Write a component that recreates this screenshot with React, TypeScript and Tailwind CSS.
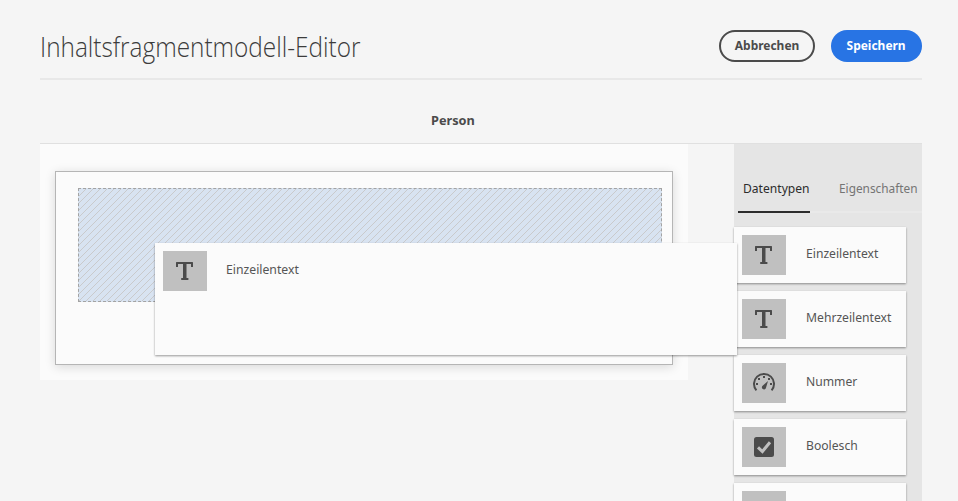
import React from "react";

type Kind = "text" | "number" | "boolean" | "none";

function TypeIcon({ kind }: { kind: Kind }) {
  return (
    <svg className="block h-10 w-11 shrink-0 bg-[#c0c0c0]" viewBox="0 0 44 40" fill="none">
      {kind === "text" && (
        <path
          fill="#4b4b4b"
          d="M13.6 11H29.4Q30 11 30 11.6V16H28V13H23.5V27H25.4V29H18.2V27H20V13H15V16H13V11.6Q13 11 13.6 11Z"
        />
      )}
      {kind === "number" && (
        <g>
          <path d="M14.4 27.4A10 10 0 1 1 29.6 27.4" stroke="#4b4b4b" strokeWidth="2" />
          <g fill="#4b4b4b">
            <rect x="16" y="15" width="2" height="2" />
            <rect x="21" y="13" width="2" height="2" />
            <rect x="26" y="15" width="2" height="2" />
            <rect x="14" y="20" width="2" height="2" />
            <rect x="28" y="20" width="2" height="2" />
            <path d="M26 18L24 24.8A2.1 2.1 0 1 1 20.6 22.7Z" />
          </g>
        </g>
      )}
      {kind === "boolean" && (
        <g>
          <rect x="12" y="10" width="20" height="20" rx="2.5" fill="#4b4b4b" />
          <path d="M16 20.3L20.4 24.5L28 15.2" stroke="#c0c0c0" strokeWidth="3" />
        </g>
      )}
    </svg>
  );
}

const types: { label: string; kind: Kind }[] = [
  { label: "Einzeilentext", kind: "text" },
  { label: "Mehrzeilentext", kind: "text" },
  { label: "Nummer", kind: "number" },
  { label: "Boolesch", kind: "boolean" },
  { label: "", kind: "none" },
];

export default function App() {
  return (
    <div className="h-[501px] w-[958px] overflow-hidden bg-[#f5f5f5] pl-10 pr-9 font-['Noto_Sans',sans-serif] text-[13px] text-[#4b4b4b]">
      <header className="flex h-20 items-start justify-between border-b-2 border-[#e8e8e8]">
        <h1 className="mt-[28px] origin-left scale-x-[0.902] whitespace-nowrap font-['Open_Sans',sans-serif] text-[27px] font-light leading-[38px] text-[#3c3c3c]">
          Inhaltsfragmentmodell-Editor
        </h1>
        <div className="mt-[30px] flex gap-4 font-bold">
          <button className="flex h-8 w-24 items-center justify-center rounded-full border-2 border-[#4b4b4b]">
            <span className="inline-block scale-x-[0.92]">Abbrechen</span>
          </button>
          <button className="flex h-8 w-[91px] items-center justify-center rounded-full bg-[#2874e4] text-white">
            <span className="inline-block scale-x-[0.92]">Speichern</span>
          </button>
        </div>
      </header>
      <div className="flex h-16 border-b border-[#e0e0e0] pl-[391px] pt-[30px] font-bold leading-5">
        <span className="inline-block origin-left scale-x-[0.98]">Person</span>
      </div>
      <div className="flex items-start justify-between">
        <main className="h-[236px] w-[648px] bg-[#fbfbfb] px-[15px] pt-[27px]">
          <div className="h-[194px] w-[618px] border border-[#b5b5b5] px-[22px] pt-4 shadow-[0_2px_10px_rgba(0,0,0,0.14)]">
            <div className="relative h-[114px] w-[584px] border border-dashed border-[#a3a3a3] bg-[#d8e3f1]">
              <svg className="block h-full w-full" aria-hidden="true">
                <defs>
                  <pattern id="hatch" width="7" height="7" patternUnits="userSpaceOnUse">
                    <path d="M-1 1L1 -1M0 7L7 0M6 8L8 6" stroke="#c9cacc" strokeWidth="1" />
                  </pattern>
                </defs>
                <rect width="100%" height="100%" fill="url(#hatch)" />
              </svg>
              <div className="absolute left-[76px] top-[54px] z-10 flex h-28 w-[582px] items-start bg-[#fbfbfb] p-2 shadow-[0_1px_2px_rgba(0,0,0,0.4)]">
                <TypeIcon kind="text" />
                <span className="ml-[19px] mt-2 inline-block origin-left scale-x-[0.94] leading-5 text-[#555]">
                  Einzeilentext
                </span>
              </div>
            </div>
          </div>
        </main>
        <aside className="h-[400px] w-[188px] bg-[#e5e5e5]">
          <nav className="ml-1 flex h-[69px] border-b-2 border-[#e9e9e9] pt-[34px] leading-5">
            <span className="h-[35px] w-[72px] shrink-0 border-b-2 border-[#2c2c2c] pl-[5px] text-[#2c2c2c]">
              <span className="inline-block origin-left scale-x-[0.93]">Datentypen</span>
            </span>
            <span className="ml-[29px] inline-block w-[80px] text-[#747474]">
              <span className="inline-block origin-left scale-x-[0.91]">Eigenschaften</span>
            </span>
          </nav>
          <ul className="mt-[14px] flex flex-col gap-2">
            {types.map((t, i) => (
              <li key={i} className="flex h-14 w-[172px] bg-[#fbfbfb] p-2 shadow-[0_1px_2px_rgba(0,0,0,0.4)]">
                <TypeIcon kind={t.kind} />
                <span className="ml-5 mt-2 inline-block h-5 origin-left scale-x-[0.935] leading-5 text-[#555]">{t.label}</span>
              </li>
            ))}
          </ul>
        </aside>
      </div>
    </div>
  );
}
